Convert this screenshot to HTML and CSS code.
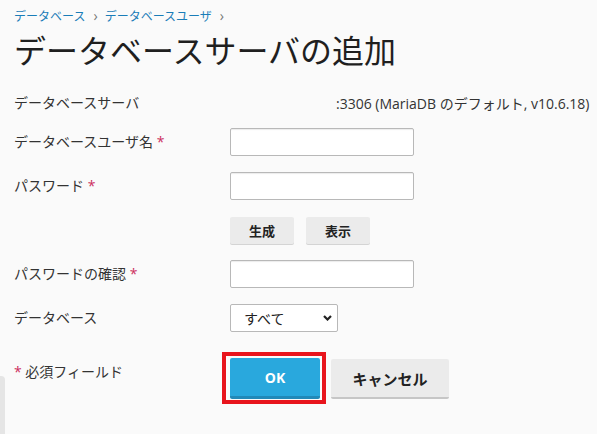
FILE: index.html
```html
<!DOCTYPE html>
<html lang="ja">
<head>
    <meta charset="UTF-8">
    <title>データベースサーバの追加</title>
    <link rel="stylesheet" href="styles.css">
</head>
<body>
<div class="page">
    <div class="crumbs">
        <a href="#">データベース</a><span class="sep">›</span><a href="#">データベースユーザ</a><span class="sep">›</span>
    </div>
    <h1 class="title">データベースサーバの追加</h1>

    <form class="form">
        <div class="row row-info">
            <span class="label">データベースサーバ</span>
            <span class="value">:3306 (MariaDB のデフォルト, v10.6.18)</span>
        </div>
        <div class="row">
            <label class="label">データベースユーザ名 <i class="req">*</i></label>
            <input class="text" type="text">
        </div>
        <div class="row">
            <label class="label">パスワード <i class="req">*</i></label>
            <input class="text" type="password">
        </div>
        <div class="row">
            <span class="label"></span>
            <div class="small-btns">
                <button type="button" class="btn-small">生成</button>
                <button type="button" class="btn-small">表示</button>
            </div>
        </div>
        <div class="row">
            <label class="label">パスワードの確認 <i class="req">*</i></label>
            <input class="text" type="password">
        </div>
        <div class="row">
            <label class="label">データベース</label>
            <div class="select-wrap">
                <select class="select">
                    <option>すべて</option>
                </select>
                <svg class="chevron" width="9" height="6" viewBox="0 0 9 6"><path d="M1 1l3.5 3.5L8 1" fill="none" stroke="#222" stroke-width="2.2"/></svg>
            </div>
        </div>
        <div class="row row-actions">
            <span class="label label-note"><i class="req">*</i> 必須フィールド</span>
            <div class="actions">
                <span class="mark"><button type="button" class="btn-ok">OK</button></span>
                <button type="button" class="btn-cancel">キャンセル</button>
            </div>
        </div>
    </form>
</div>
<div class="side-edge"></div>
</body>
</html>
```

FILE: styles.css
```css
* {
    margin: 0;
    padding: 0;
    box-sizing: border-box;
}
body {
    background: #fafafa;
    color: #222;
    font-family: "Open Sans", "Noto Sans CJK JP", sans-serif;
    font-size: 14px;
    height: 434px;
    overflow: hidden;
    position: relative;
}
.page {
    padding: 6px 14px 0;
}

.crumbs {
    font-size: 12px;
    line-height: 20px;
}
.crumbs a {
    color: #1a7db8;
    text-decoration: none;
}
.crumbs .sep {
    color: #777;
    margin: 0 7px 0 8px;
    font-size: 14px;
}

.title {
    font-size: 32px;
    font-weight: normal;
    line-height: 44px;
    margin-top: 2px;
    color: #1f1f1f;
}

.form {
    margin-top: 16px;
}
.row {
    display: grid;
    grid-template-columns: 216px auto;
    align-items: center;
    min-height: 28px;
    margin-bottom: 16px;
}
.row-info {
    margin-bottom: 11px;
}
.label {
    color: #333;
    line-height: 20px;
}
.value {
    padding-left: 106px;
    color: #333;
    white-space: nowrap;
}
.req {
    font-style: normal;
    color: #cc2f5f;
}

.text {
    width: 184px;
    height: 28px;
    background: #fff;
    border: 1px solid #b8b8b8;
    border-radius: 2px;
    box-shadow: inset 0 2px 1px -1px #ececec;
}

.small-btns {
    display: flex;
    gap: 12px;
}
.btn-small {
    width: 64px;
    height: 27px;
    border: 0;
    border-radius: 2px;
    background: #ebebeb;
    box-shadow: 0 1px 0 #d4d4d4;
    font-family: inherit;
    font-size: 13px;
    font-weight: bold;
    color: #222;
}

.select-wrap {
    position: relative;
    width: 108px;
}
.select {
    appearance: none;
    -webkit-appearance: none;
    width: 108px;
    height: 28px;
    padding-left: 13px;
    background: #fff;
    border: 1px solid #b8b8b8;
    border-radius: 2px;
    font-family: inherit;
    font-size: 14px;
    color: #222;
}
.chevron {
    position: absolute;
    right: 6px;
    top: 11px;
}

.row-actions {
    align-items: start;
}
.label-note {
    padding-top: 14px;
}
.actions {
    display: flex;
    align-items: flex-start;
    gap: 5px;
    margin-left: -8px;
    margin-top: 4px;
}
.mark {
    display: block;
    border: 4px solid #e8141c;
    padding: 2px 2px 1px 4px;
}
.btn-ok {
    display: block;
    width: 90px;
    height: 41px;
    border: 0;
    border-bottom: 3px solid #2189b8;
    border-radius: 2px;
    background: #29a8dd;
    color: #fff;
    font-family: inherit;
    font-size: 14px;
    font-weight: bold;
}
.btn-cancel {
    margin-top: 7px;
    width: 118px;
    height: 40px;
    border: 0;
    border-bottom: 2px solid #c6c6c6;
    border-radius: 2px;
    background: #ebebeb;
    color: #222;
    font-family: inherit;
    font-size: 15px;
    font-weight: bold;
}

.side-edge {
    position: absolute;
    left: 0;
    top: 376px;
    width: 5px;
    height: 60px;
    background: #e5e5e5;
    border-top-right-radius: 4px;
}
```
